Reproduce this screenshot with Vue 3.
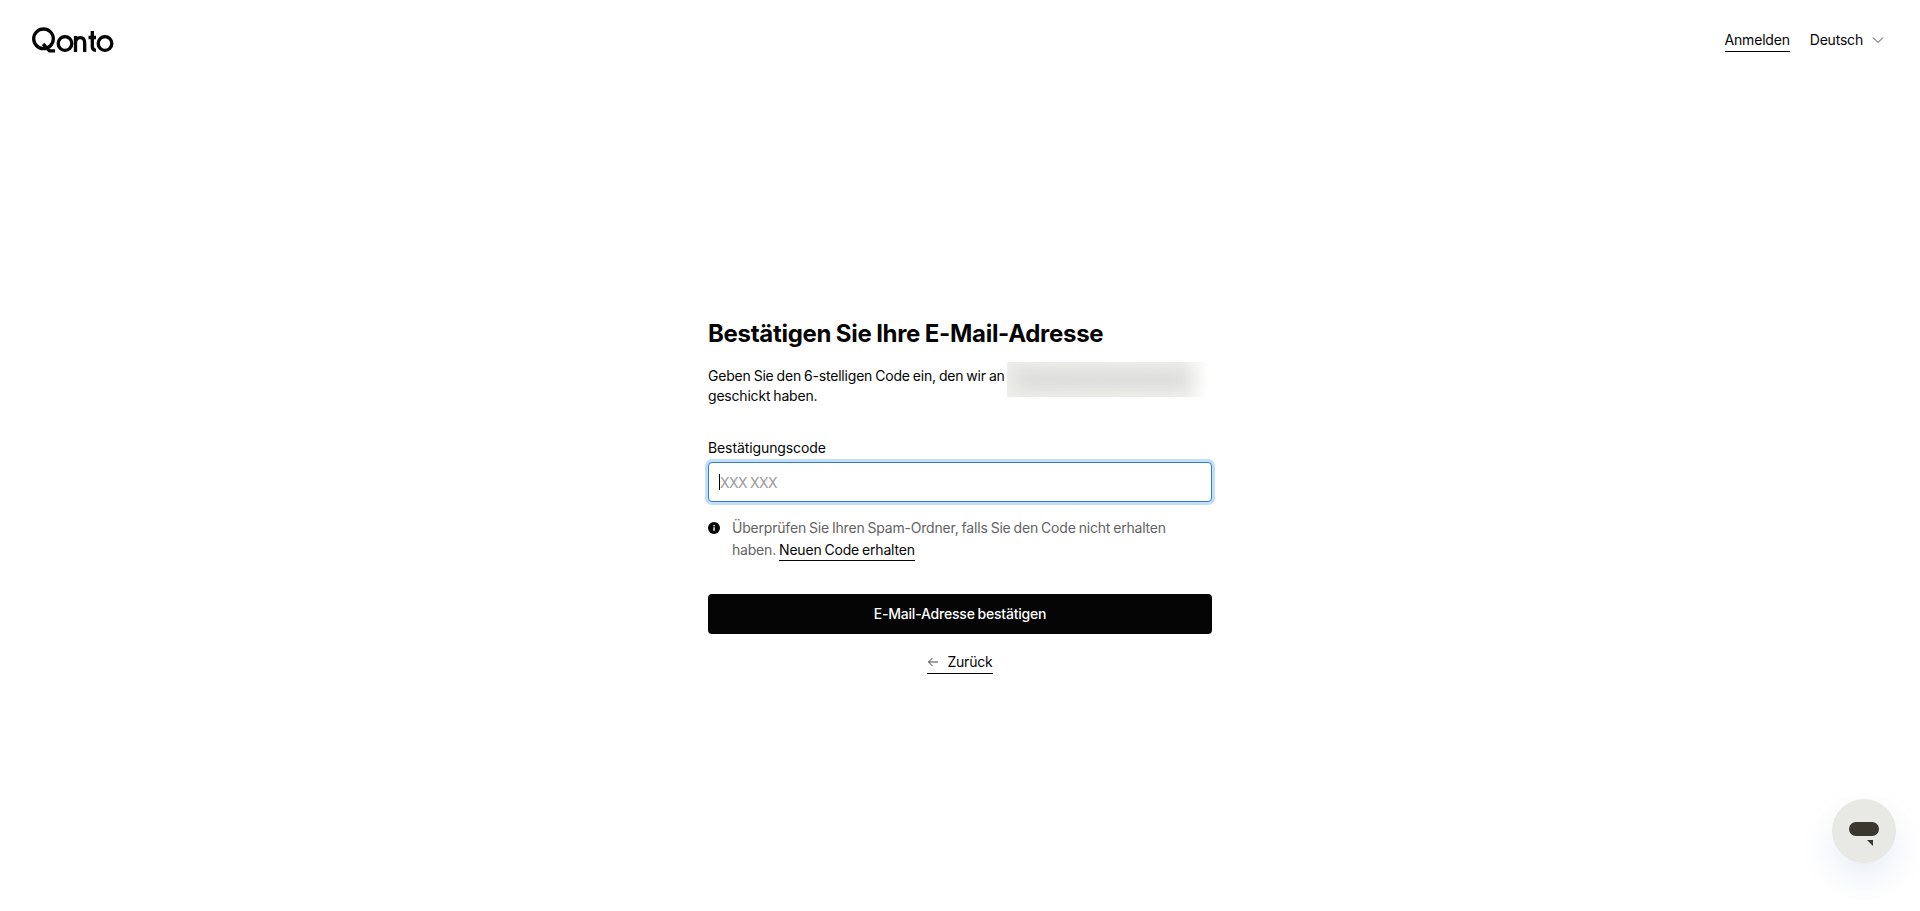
<template>
  <div class="page">
    <header class="topbar">
      <svg class="logo" viewBox="0 0 82 26" width="82" height="26" role="img" aria-label="Qonto">
        <g fill="none" stroke="#050505" stroke-width="3.300">
          <circle cx="11.500" cy="11.800" r="9.800" />
          <path d="M11 17l6.500 6.800h5.500" />
          <circle cx="33" cy="16.500" r="6.800" />
          <path d="M43.500 25V9M43.500 16.500c0-3.700 2-5.800 4.800-5.800s4.400 2.200 4.400 5.800V25" />
          <path d="M60.300 4v15.500c0 2.700 1 3.800 3.700 3.800M56.500 10.500h7.500" />
          <circle cx="73" cy="16.500" r="6.800" />
        </g>
      </svg>
      <nav class="nav">
        <a class="link">Anmelden</a>
        <button class="lang">
          Deutsch
          <svg viewBox="0 0 12 12" width="12" height="12"><path d="M1 3.500l5 5 5-5" fill="none" stroke="#444" stroke-width="1" /></svg>
        </button>
      </nav>
    </header>

    <main class="main">
      <form class="form" @submit.prevent>
        <h1 class="title">Bestätigen Sie Ihre E-Mail-Adresse</h1>
        <p class="desc">
          Geben Sie den 6-stelligen Code ein, den wir an
          <span class="redacted"><span class="smear"></span></span>
          geschickt haben.
        </p>

        <label class="label" for="code">Bestätigungscode</label>
        <div class="field">
          <input id="code" ref="codeInput" class="input" type="text" placeholder="XXX XXX" />
          <span class="caret"></span>
        </div>

        <div class="hint">
          <svg class="info" viewBox="0 0 12 12" width="12" height="12">
            <circle cx="6" cy="6" r="6" fill="#050505" />
            <rect x="5.300" y="5.200" width="1.400" height="3.600" fill="#fff" />
            <rect x="5.300" y="3" width="1.400" height="1.400" fill="#fff" />
          </svg>
          <p>
            Überprüfen Sie Ihren Spam-Ordner, falls Sie den Code nicht erhalten haben.
            <a class="link inline">Neuen Code erhalten</a>
          </p>
        </div>

        <button class="submit" type="submit">E-Mail-Adresse bestätigen</button>

        <a class="link back">
          <svg viewBox="0 0 12 12" width="12" height="12"><path d="M11 6H1.500M5.500 2l-4 4 4 4" fill="none" stroke="#444" stroke-width="1" /></svg>
          Zurück
        </a>
      </form>
    </main>

    <button class="chat" aria-label="Chat">
      <svg viewBox="0 0 32 26" width="32" height="26">
        <rect x="1" y="0" width="30" height="14" rx="7" fill="#3a382e" />
        <path d="M19 18h6v6z" fill="#3a382e" />
      </svg>
    </button>
  </div>
</template>

<script setup>
import { ref, onMounted } from 'vue'

const codeInput = ref(null)

onMounted(() => {
  codeInput.value.focus()
})
</script>

<style scoped>
.page {
  min-height: 911px;
  display: flex;
  flex-direction: column;
  font-family: Inter, "Liberation Sans", sans-serif;
  font-size: 14px;
  font-weight: 430;
  line-height: 20px;
  letter-spacing: -0.2px;
  word-spacing: -0.7px;
  color: #050505;
}

.topbar {
  display: flex;
  justify-content: space-between;
  align-items: center;
  height: 80px;
  padding: 0 36px 0 32px;
}

.logo {
  display: block;
}

.nav {
  display: flex;
  align-items: center;
  gap: 20px;
  padding-top: 2px;
}

.link {
  display: inline-block;
  color: #050505;
  border-bottom: 1px solid #050505;
  padding-bottom: 1px;
  cursor: pointer;
}

.link.inline {
  display: inline;
  padding-bottom: 2px;
}

.lang {
  display: flex;
  align-items: center;
  gap: 9px;
  padding: 0 0 2px;
  border: 0;
  background: none;
  font: inherit;
  letter-spacing: inherit;
  word-spacing: inherit;
  color: inherit;
}

.main {
  display: flex;
  justify-content: center;
  padding-top: 238px;
}

.form {
  width: 504px;
  display: flex;
  flex-direction: column;
}

.title {
  margin: 0;
  font-size: 24px;
  line-height: 32px;
  font-weight: 650;
  letter-spacing: -0.3px;
}

.desc {
  margin: 16px 0 0;
}

.redacted {
  display: inline-block;
  width: 202px;
  height: 35px;
  margin: -10px 0 -10px -1px;
  vertical-align: middle;
  overflow: hidden;
  position: relative;
  top: 2px;
  background: linear-gradient(90deg, #eeeeec 0, #f0f0ee 88%, #fff 100%);
}

.smear {
  position: absolute;
  left: 8px;
  right: 20px;
  top: 10px;
  height: 15px;
  background: #d4d4d2;
  filter: blur(9px);
}

.label {
  margin-top: 32px;
  margin-bottom: 4px;
  letter-spacing: -0.1px;
}

.field {
  position: relative;
  display: flex;
}

.input {
  flex: 1;
  box-sizing: border-box;
  height: 40px;
  padding: 0 11px;
  border: 1px solid #3b78c9;
  border-radius: 4px;
  box-shadow: 0 0 0 3px #bfe0fb;
  outline: none;
  font: inherit;
  letter-spacing: inherit;
  word-spacing: inherit;
  color: #050505;
  caret-color: transparent;
}

.input::placeholder {
  color: #9b9b9b;
  letter-spacing: -0.5px;
}

.caret {
  position: absolute;
  left: 11px;
  top: 12px;
  width: 1px;
  height: 16px;
  background: #050505;
}

.hint {
  display: flex;
  align-items: flex-start;
  gap: 12px;
  margin-top: 15px;
  color: #636363;
}

.hint p {
  margin: 0;
  line-height: 22px;
}

.info {
  flex: none;
  margin-top: 5px;
}

.submit {
  margin-top: 33px;
  height: 40px;
  border: 0;
  border-radius: 4px;
  background: #050505;
  color: #fff;
  font: inherit;
  font-weight: 500;
  letter-spacing: inherit;
  word-spacing: inherit;
}

.back {
  align-self: center;
  display: inline-flex;
  align-items: center;
  gap: 8px;
  margin-top: 18px;
}

.chat {
  position: fixed;
  right: 24px;
  bottom: 48px;
  width: 64px;
  height: 64px;
  display: flex;
  align-items: center;
  justify-content: center;
  padding: 8px 0 0;
  border: 0;
  border-radius: 50%;
  background: #e8e8e4;
  box-shadow: 0 16px 32px rgba(120, 150, 190, 0.16);
}
</style>

<style>
body {
  background: #fff;
}
</style>
